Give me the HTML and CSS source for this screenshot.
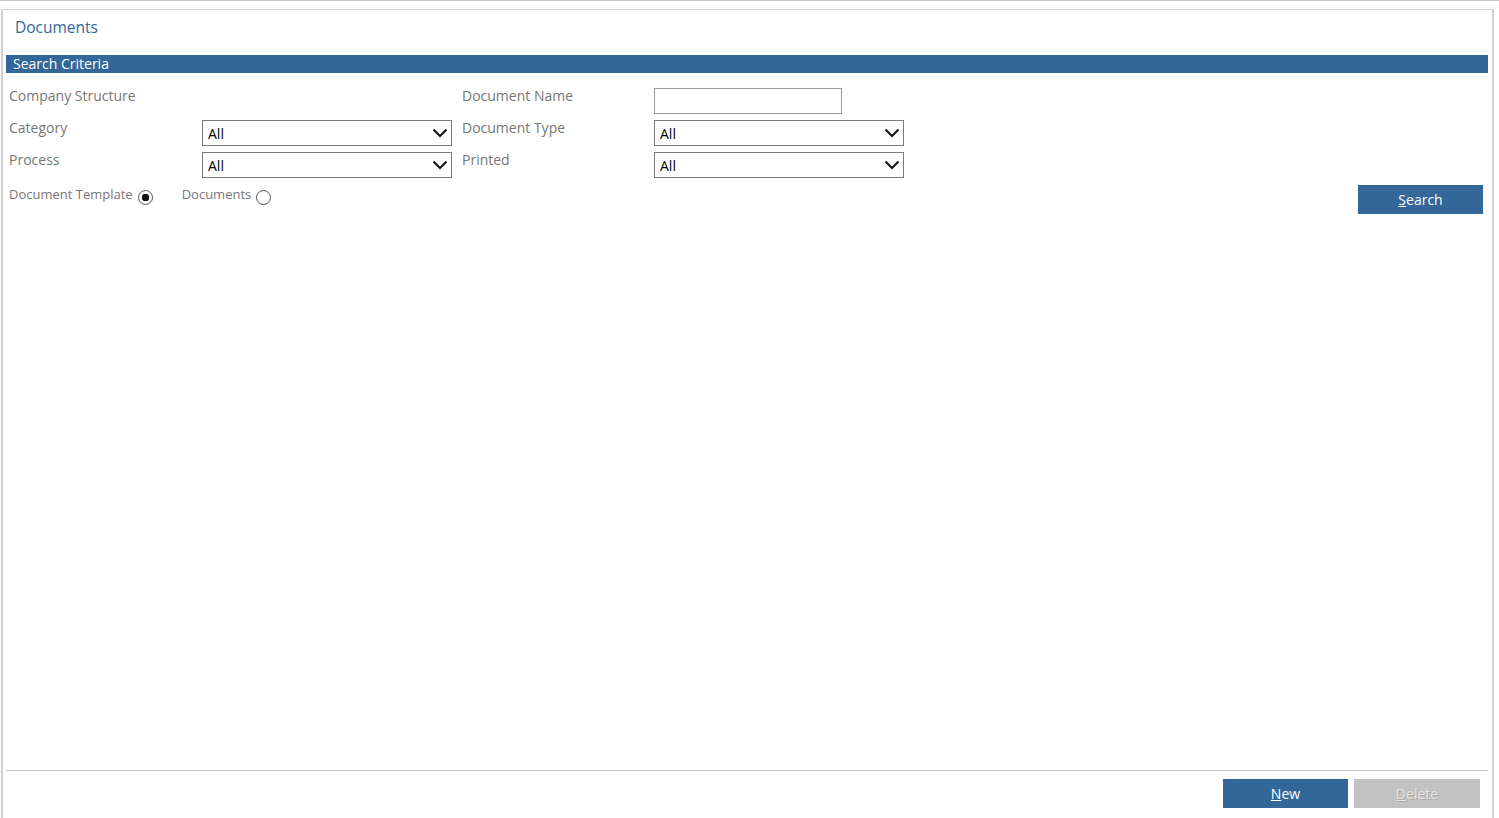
FILE: index.html
```html
<!DOCTYPE html>
<html lang="en">
<head>
  <meta charset="UTF-8" />
  <title>Documents</title>
  <link rel="stylesheet" href="styles.css">
</head>
<body>
  <div class="page">
    <div class="panel">
      <h1 class="title">Documents</h1>
      <div class="section-bar">Search Criteria</div>

      <div class="criteria">
        <div class="field-label">Company Structure</div>
        <div class="field"></div>
        <div class="field-label">Document Name</div>
        <div class="field"><input type="text" class="text-input" /></div>

        <div class="field-label">Category</div>
        <div class="field">
          <div class="select-wrap">
            <select class="select"><option>All</option></select>
            <svg class="chevron" width="16" height="10" viewBox="0 0 16 10"><path d="M1.5 1.5 L8 8 L14.5 1.5" fill="none" stroke="#111" stroke-width="2"/></svg>
          </div>
        </div>
        <div class="field-label">Document Type</div>
        <div class="field">
          <div class="select-wrap">
            <select class="select"><option>All</option></select>
            <svg class="chevron" width="16" height="10" viewBox="0 0 16 10"><path d="M1.5 1.5 L8 8 L14.5 1.5" fill="none" stroke="#111" stroke-width="2"/></svg>
          </div>
        </div>

        <div class="field-label">Process</div>
        <div class="field">
          <div class="select-wrap">
            <select class="select"><option>All</option></select>
            <svg class="chevron" width="16" height="10" viewBox="0 0 16 10"><path d="M1.5 1.5 L8 8 L14.5 1.5" fill="none" stroke="#111" stroke-width="2"/></svg>
          </div>
        </div>
        <div class="field-label">Printed</div>
        <div class="field">
          <div class="select-wrap">
            <select class="select"><option>All</option></select>
            <svg class="chevron" width="16" height="10" viewBox="0 0 16 10"><path d="M1.5 1.5 L8 8 L14.5 1.5" fill="none" stroke="#111" stroke-width="2"/></svg>
          </div>
        </div>
      </div>

      <div class="options-row">
        <label class="radio-label">Document Template <input type="radio" name="kind" class="radio" checked /></label>
        <label class="radio-label second">Documents <input type="radio" name="kind" class="radio" /></label>
        <button class="btn btn-search"><u>S</u>earch</button>
      </div>

      <div class="footer">
        <button class="btn"><u>N</u>ew</button>
        <button class="btn btn-disabled" disabled><u>D</u>elete</button>
      </div>
    </div>
  </div>
</body>
</html>
```

FILE: styles.css
```css
html, body {
  margin: 0;
  padding: 0;
  background: #fff;
  overflow: hidden;
}
body {
  font-family: 'Open Sans', 'Noto Sans', sans-serif;
  font-size: 14px;
  color: #777;
}
.page {
  border-top: 1px solid #c8c8c8;
  padding: 8px 5px 0 1px;
}
.panel {
  box-sizing: border-box;
  height: 813px;
  border: 2px solid #d2d2d2;
  border-top-width: 1px;
  border-bottom: none;
  padding: 0 4px 0 3px;
  display: flex;
  flex-direction: column;
}
.title {
  margin: 7px 0 18px;
  padding-left: 9px;
  font-size: 15.5px;
  font-weight: normal;
  line-height: 20px;
  color: #336699;
}
.section-bar {
  background: #336699;
  color: #fff;
  font-size: 14px;
  line-height: 18px;
  height: 18px;
  padding-left: 7px;
}
.criteria {
  margin-top: 15px;
  padding-left: 3px;
  display: grid;
  grid-template-columns: 193px 260px 192px 1fr;
  grid-auto-rows: 26px;
  row-gap: 6px;
}
.field-label {
  line-height: 18px;
  margin-top: -1px;
}
.text-input {
  box-sizing: border-box;
  width: 188px;
  height: 26px;
  border: 1px solid #9a9a9a;
  margin: 0;
}
.select-wrap {
  position: relative;
  width: 250px;
  height: 26px;
}
.select {
  appearance: none;
  -webkit-appearance: none;
  box-sizing: border-box;
  width: 100%;
  height: 26px;
  margin: 0;
  border: 1px solid #7a7a7a;
  border-radius: 0;
  background: #fff;
  font-family: 'Open Sans', sans-serif;
  font-size: 14px;
  color: #000;
  padding: 1px 0 0 5px;
}
.chevron {
  position: absolute;
  right: 4px;
  top: 8px;
  pointer-events: none;
}
.options-row {
  display: flex;
  align-items: flex-start;
  margin-top: 7px;
  padding: 0 5px 0 3px;
}
.radio-label {
  display: flex;
  align-items: flex-start;
  gap: 5px;
  font-size: 13px;
  line-height: 18px;
  margin-top: 0;
}
.radio-label.second {
  margin-left: 29px;
}
.radio {
  appearance: none;
  -webkit-appearance: none;
  width: 15px;
  height: 15px;
  margin: 5px 0 0;
  border: 1px solid #555;
  border-radius: 50%;
  background: #fff;
}
.radio:checked {
  background: radial-gradient(circle, #111 0 3.5px, #fff 4px);
}
.btn {
  width: 125px;
  height: 29px;
  border: none;
  background: #336699;
  color: #fff;
  font-family: 'Open Sans', sans-serif;
  font-size: 14px;
  cursor: pointer;
  padding: 0;
}
.btn-search {
  margin-left: auto;
}
.btn-disabled {
  width: 126px;
  background: #c2c2c2;
  color: #e6e6e6;
  text-shadow: 1px 1px 0 #a8a8a8;
  cursor: default;
}
.footer {
  margin-top: auto;
  border-top: 1px solid #c8c8c8;
  padding: 8px 8px 14px 0;
  display: flex;
  justify-content: flex-end;
  gap: 6px;
}
```
